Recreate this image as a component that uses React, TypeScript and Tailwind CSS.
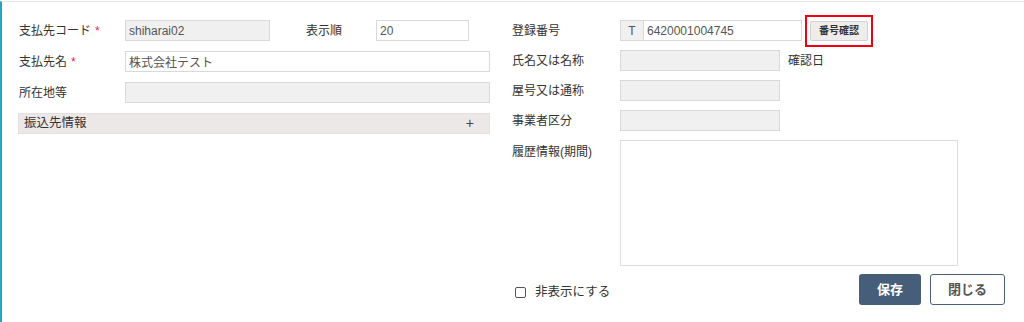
import { useState } from 'react'

const Req = () => <span className="ml-1 text-[#e0245e]">*</span>

const App = () => {
  const [hidden, setHidden] = useState(false)

  return (
    <div className="h-[322px] w-[1024px] bg-white pt-px font-['Liberation_Sans','Noto_Sans_CJK_JP',sans-serif] text-[12px] text-[#333]">
      <div className="flex h-full border-t border-l-2 border-t-[#e6e6e6] border-l-[#23a5c3] pt-[18px]">
        {/* Left column */}
        <div className="ml-[16px] flex w-[472px] flex-col gap-[10px]">
          <div className="flex h-[21px] items-center">
            <label className="w-[107px] pl-px">支払先コード<Req /></label>
            <input
              readOnly
              value="shiharai02"
              className="h-[21px] w-[145px] border border-[#d9d9d9] bg-[#f0f0f0] px-[3px] text-[#555] outline-none"
            />
            <label className="ml-[36px] w-[70px]">表示順</label>
            <input
              defaultValue="20"
              className="h-[21px] w-[93px] border border-[#d9d9d9] bg-white px-[3px] text-[#555] outline-none"
            />
          </div>
          <div className="flex h-[21px] items-center">
            <label className="w-[107px] pl-px">支払先名<Req /></label>
            <input
              defaultValue="株式会社テスト"
              className="h-[21px] flex-1 border border-[#d9d9d9] bg-white px-[3px] text-[#555] outline-none"
            />
          </div>
          <div className="flex h-[21px] items-center">
            <label className="w-[107px] pl-px">所在地等</label>
            <input readOnly className="h-[21px] flex-1 border border-[#d9d9d9] bg-[#f0f0f0] outline-none" />
          </div>
          <div className="flex h-[21px] items-center justify-between border border-[#e4e0e0] bg-[#ece8e8] pr-[15px] pl-[5px]">
            <span className="text-[12.5px]">振込先情報</span>
            <span className="text-[14px] text-[#444]">+</span>
          </div>
        </div>

        {/* Right column */}
        <div className="ml-[22px] flex flex-1 flex-col">
          <div className="flex flex-col gap-[9px]">
            <div className="flex h-[21px] items-center">
              <label className="w-[108px]">登録番号</label>
              <div className="flex h-[21px] w-[182px] border border-[#d9d9d9]">
                <span className="flex w-[23px] items-center justify-center border-r border-[#d9d9d9] bg-[#f0f0f0] text-[#555]">T</span>
                <input
                  defaultValue="6420001004745"
                  className="min-w-0 flex-1 bg-white px-[3px] text-[#555] outline-none"
                />
              </div>
              <div className="relative ml-[8px]">
                <button className="h-[20px] w-[58px] rounded-[2px] border border-[#d4d0d0] bg-[#efecec] text-[10px] font-bold text-[#333]">
                  番号確認
                </button>
                <div className="pointer-events-none absolute -inset-x-[5px] -inset-y-[6px] border-2 border-[#f00010]" />
              </div>
            </div>
            <div className="flex h-[21px] items-center">
              <label className="w-[108px]">氏名又は名称</label>
              <input readOnly className="h-[21px] w-[160px] border border-[#d9d9d9] bg-[#f0f0f0] outline-none" />
              <span className="ml-[8px]">確認日</span>
            </div>
            <div className="flex h-[21px] items-center">
              <label className="w-[108px]">屋号又は通称</label>
              <input readOnly className="h-[21px] w-[160px] border border-[#d9d9d9] bg-[#f0f0f0] outline-none" />
            </div>
            <div className="flex h-[21px] items-center">
              <label className="w-[108px]">事業者区分</label>
              <input readOnly className="h-[21px] w-[160px] border border-[#d9d9d9] bg-[#f0f0f0] outline-none" />
            </div>
            <div className="flex">
              <label className="w-[108px] pt-[3px]">履歴情報(期間)</label>
              <textarea readOnly className="h-[126px] w-[338px] resize-none border border-[#dedede] bg-white outline-none" />
            </div>
          </div>

          <div className="mt-[8px] flex w-[493px] items-center justify-between">
            <label className="mt-[6px] ml-[3px] flex items-center gap-[9px] text-[12.5px]">
              <input
                type="checkbox"
                checked={hidden}
                onChange={() => setHidden(!hidden)}
                className="h-[11px] w-[11px] appearance-none rounded-[2px] border border-[#555] bg-white"
              />
              非表示にする
            </label>
            <div className="flex gap-[9px]">
              <button className="h-[31px] w-[62px] rounded-[3px] bg-[#475e7a] text-[13px] font-bold text-white">保存</button>
              <button className="h-[31px] w-[75px] rounded-[3px] border border-[#4a607c] bg-white text-[13px] font-bold text-[#555]">閉じる</button>
            </div>
          </div>
        </div>
      </div>
    </div>
  )
}

export default App
